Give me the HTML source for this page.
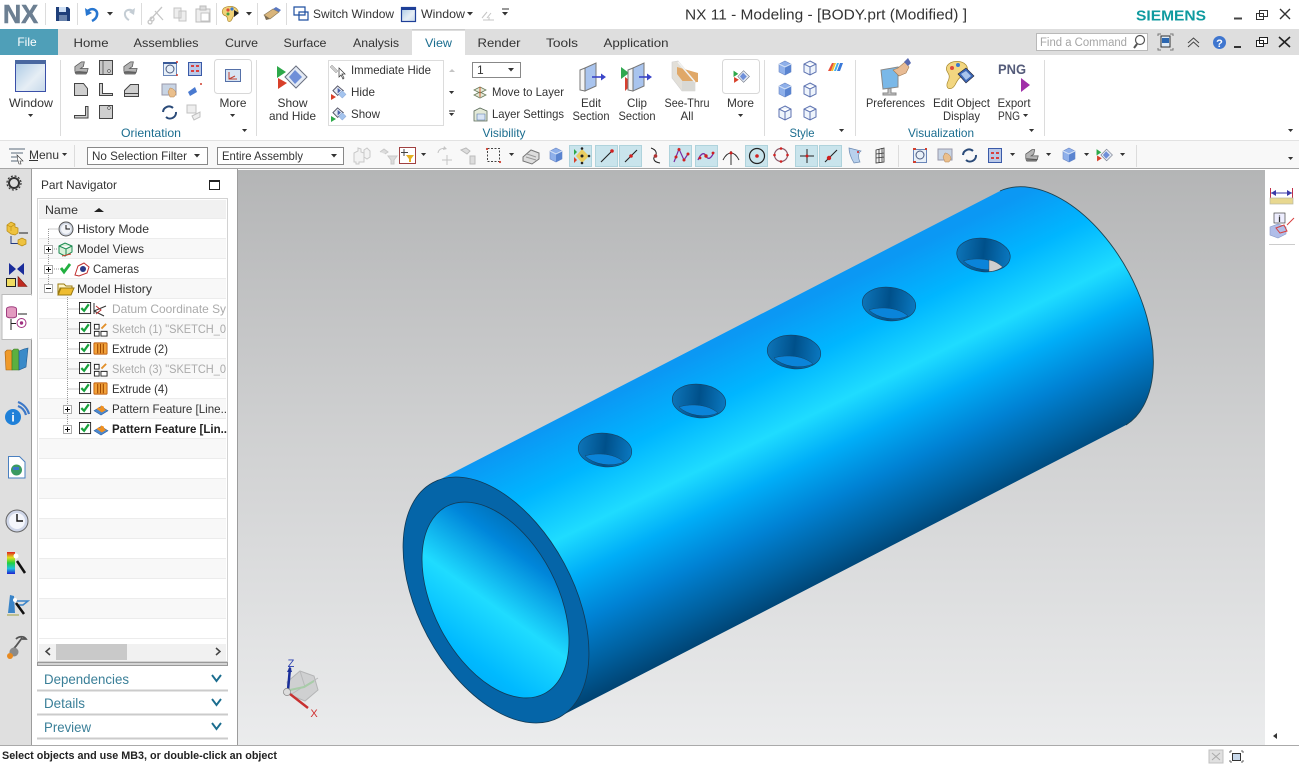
<!DOCTYPE html>
<html><head><meta charset="utf-8"><title>NX 11 - Modeling</title>
<style>
html,body{margin:0;padding:0;width:1299px;height:767px;overflow:hidden;background:#fff}
svg{display:block;position:absolute;left:0;top:0}
text{font-family:"Liberation Sans",sans-serif;font-size:12px;fill:#333}
.m{text-anchor:middle}
.t{fill:#1b6d8f}
.g{fill:#aaa}
.d{fill:#3a7f98;font-size:14px}
.sep{stroke:#dcdcdc;stroke-width:1}
</style></head><body>
<svg width="1299" height="767" viewBox="0 0 1299 767" xmlns="http://www.w3.org/2000/svg">
<defs>
<linearGradient id="bg" x1="0" y1="0" x2="0" y2="1"><stop offset="0" stop-color="#b4b5b6"/><stop offset=".45" stop-color="#cfd0d1"/><stop offset="1" stop-color="#ebeced"/></linearGradient>
<linearGradient id="cyl" gradientUnits="userSpaceOnUse" x1="447" y1="477" x2="563" y2="713">
<stop offset="0" stop-color="#0b98f4"/><stop offset=".2" stop-color="#00b6ff"/><stop offset=".4" stop-color="#1fdcff"/><stop offset=".55" stop-color="#00aef8"/><stop offset=".72" stop-color="#0082d4"/><stop offset=".88" stop-color="#00609f"/><stop offset="1" stop-color="#004474"/></linearGradient>
<linearGradient id="inn" gradientUnits="userSpaceOnUse" x1="450" y1="510" x2="540" y2="690">
<stop offset="0" stop-color="#00609f"/><stop offset=".25" stop-color="#0086da"/><stop offset=".53" stop-color="#1fdcff"/><stop offset=".8" stop-color="#00baff"/><stop offset="1" stop-color="#00a6f4"/></linearGradient>
<linearGradient id="hole" x1="0" y1="0" x2="1" y2="0"><stop offset="0" stop-color="#0d74b8"/><stop offset=".5" stop-color="#00508a"/><stop offset="1" stop-color="#0a78c0"/></linearGradient>
<linearGradient id="win" x1="0" y1="0" x2="1" y2="1"><stop offset="0" stop-color="#a9c8e4"/><stop offset=".6" stop-color="#e6eef5"/><stop offset="1" stop-color="#c5d8ea"/></linearGradient>
<linearGradient id="rb" x1="0" y1="0" x2="0" y2="1"><stop offset="0" stop-color="#e02020"/><stop offset=".25" stop-color="#e0e020"/><stop offset=".5" stop-color="#20d040"/><stop offset=".75" stop-color="#20c0e0"/><stop offset="1" stop-color="#2020d0"/></linearGradient>
<symbol id="dn" viewBox="0 0 7 4" overflow="visible"><path d="M0 0h6l-3 3.500z" fill="#333"/></symbol>
<symbol id="cube" viewBox="0 0 16 16"><path d="M8 1l6 3v8l-6 3-6-3V4z" fill="#8fb0ea" stroke="#6a86c4" stroke-width=".6"/><path d="M8 7v8l6-3V4z" fill="#5a84d0"/><path d="M2 4l6 3 6-3" fill="none" stroke="#d4e2f6"/></symbol>
<symbol id="wire" viewBox="0 0 16 16"><path d="M8 1l6 3v8l-6 3-6-3V4zM2 4l6 3 6-3M8 7v8" fill="#eef4fb" stroke="#5d72b0"/></symbol>
<symbol id="part" viewBox="0 0 18 18"><path d="M2 13V8l7-5h3l-1 5-3 2h8l-1 4z" fill="#b4b4b4" stroke="#555" stroke-width=".8"/><path d="M2 14h13l-1 2H3z" fill="#777" stroke="#444" stroke-width=".5"/></symbol>
<symbol id="check" viewBox="0 0 14 14"><rect x=".5" y=".5" width="12" height="12" fill="#fff" stroke="#222"/><path d="M2.500 6.500l3 3 5-7" fill="none" stroke="#17a23c" stroke-width="2.400"/></symbol>
<symbol id="plus" viewBox="0 0 9 9"><rect x=".5" y=".5" width="8" height="8" fill="#fff" stroke="#aaa"/><path d="M2 4.500h5M4.500 2v5" stroke="#111"/></symbol>
<symbol id="ext" viewBox="0 0 16 16"><rect x="1" y="2" width="14" height="12" rx="1" fill="#f2a23a" stroke="#c06010"/><path d="M5 3v10M8 3v10M11 3v10" stroke="#a34a00" stroke-width="1.200"/></symbol>
<symbol id="skt" viewBox="0 0 16 16"><path d="M1.500 2.500h5v5h-5zM1.500 10h5v5h-5zM8.500 10h6.500v5H8.500z" fill="#fff" stroke="#222"/><path d="M9 7l5-5" stroke="#e2902a" stroke-width="2"/></symbol>
<symbol id="pat" viewBox="0 0 18 16"><path d="M1 10l8-5 8 5-8 5z" fill="#4a88d0" stroke="#2a5a9a" stroke-width=".6"/><path d="M4 8l2-2 2 1 1-3 3 1 1 3 2 1-5 3z" fill="#f09020"/></symbol>
<symbol id="sh" viewBox="0 0 32 24"><path d="M1 1l9 6-9 6z" fill="#2ea84a"/><path d="M2 13l9 5-9 6z" fill="#d8402a"/><path d="M20 1l11 11-11 11L9 12z" fill="#e4eaf4" stroke="#6a7080"/><path d="M19 5l7 7-7 7-6-7z" fill="#6f8fd8"/></symbol>
<symbol id="sh2" viewBox="0 0 16 16"><path d="M6 1l6 5-6 5-5-5z" fill="#e4eaf4" stroke="#556"/><path d="M6 3l3.500 3L6 9z" fill="#4a62a8"/><path d="M11 6l4 4-4 4-4-4z" fill="#a4c4ee" stroke="#7a9ad0" stroke-width=".5"/></symbol>
</defs>

<rect width="1299" height="29" fill="#fff"/>
<rect y="29" width="1299" height="26" fill="#dedede"/>
<rect x="0" y="29" width="58" height="26" fill="#4f9fb8"/>
<rect x="412" y="30" width="53" height="26" fill="#fff"/>
<path d="M412 30h53" stroke="#bbb"/>
<rect y="55" width="1299" height="85" fill="#fff"/>
<rect y="140" width="1299" height="28" fill="#f8f8f8"/>
<path d="M0 140.500h1299" stroke="#e2e2e2"/>
<path d="M0 168.500h1299" stroke="#a5a5a5"/>
<rect y="169" width="31" height="576" fill="#dfdfdf"/>
<rect x="31" y="169" width="207" height="576" fill="#fff"/>
<rect x="238" y="170" width="1027" height="575" fill="url(#bg)"/>
<rect x="1265" y="169" width="34" height="576" fill="#fff"/>
<path d="M31.500 169v576M237.500 169v576" stroke="#9c9c9c"/>
<path d="M1269 244.500h26" stroke="#ccc"/>
<rect y="745" width="1299" height="22" fill="#fff"/>
<path d="M0 745.500h1299" stroke="#aaa"/>

<!-- title row -->
<text x="3" y="23" style="font-size:26px;font-weight:700;fill:#6c7f92;stroke:#6c7f92;stroke-width:.6" textLength="35" lengthAdjust="spacingAndGlyphs">NX</text>
<path class="sep" d="M45.500 3v22M77.500 3v22M141.500 3v22M216.500 3v22M257.500 3v22M286.500 3v22"/>
<path d="M56 7h12l2 2v12H56z" fill="#1f3f7a"/><rect x="59" y="7" width="7" height="5" fill="#cfe0f5"/><rect x="59" y="15" width="8" height="6" fill="#6a84ad"/>
<path d="M87 12c4-5 11-3 10 3-.4 3-3 5-5 6" fill="none" stroke="#2776d0" stroke-width="2.600"/><path d="M85 8l1 8 6-3z" fill="#2776d0"/>
<use href="#dn" x="107" y="12" width="7" height="4"/>
<path d="M134 12c-4-4-10-2-9 3 .3 2 2 4 4 5" fill="none" stroke="#c4cdd4" stroke-width="2"/><path d="M135 8l-1 7-5-3z" fill="#c4cdd4"/>
<path d="M150 20l12-13M163 20l-8-9M150 20a2 2 0 1 0 .1 0M152 17a2 2 0 1 0 .1 0" fill="none" stroke="#c6c6c6" stroke-width="1.300"/>
<path d="M174 8h7v10h-7zM179 11h7v10h-7z" fill="#eee" stroke="#c4c4c4"/>
<path d="M196 9h14v13h-14z" fill="#eee" stroke="#bdbdbd"/><rect x="200" y="6" width="6" height="4" fill="#ddd" stroke="#bbb"/><path d="M201 13h8v8h-8z" fill="#fff" stroke="#c4c4c4"/>
<path d="M224 8c5-3 12-2 14 3 1 4-4 3-5 6-1 2-2 6-5 4-1-2 0-4-2-5-4-1-5-5-2-8z" fill="#f1d277" stroke="#b08a30" stroke-width=".7"/><circle cx="228" cy="10" r="1.600" fill="#e04a3a"/><circle cx="232" cy="9" r="1.600" fill="#3a7ad0"/><path d="M234 10l5 3-5 4z" fill="#222"/><circle cx="228" cy="14" r="1.500" fill="#4aa040"/>
<use href="#dn" x="246" y="12" width="7" height="4"/>
<path d="M264 15l9-6 6 3-9 7z" fill="#d9b57b" stroke="#8a7a5a" stroke-width=".7"/><path d="M273 9l6 3 2-2-5-3z" fill="#5a78c0"/><path d="M264 15l6 4-4 1z" fill="#7a6a50"/>
<path d="M294 7h11v8h-11zM299 12h9v8h-9z" fill="#fff" stroke="#1f4fa0" stroke-width="1.200"/>
<text x="313" y="18" textLength="81" lengthAdjust="spacingAndGlyphs">Switch Window</text>
<rect x="401.500" y="7.500" width="14" height="14" fill="url(#win)" stroke="#1e3f98" stroke-width="1.200"/><rect x="401" y="7" width="15" height="3" fill="#1e3f98"/>
<text x="421" y="18" textLength="44" lengthAdjust="spacingAndGlyphs">Window</text>
<use href="#dn" x="467" y="12" width="7" height="4"/>
<path d="M482 18l5-6M487 18l4-5M483 20h11M489 17v3" stroke="#c4c4c4" fill="none"/>
<path d="M502 9h7" stroke="#333"/><use href="#dn" x="502" y="12" width="7" height="4"/>
<text x="685" y="19.500" style="font-size:15px" textLength="282" lengthAdjust="spacingAndGlyphs">NX 11 - Modeling - [BODY.prt (Modified) ]</text>
<text x="1136" y="20.500" style="font-size:15px;font-weight:700;fill:#0f9a9f" textLength="70" lengthAdjust="spacingAndGlyphs">SIEMENS</text>
<path d="M1234 18.500h8" stroke="#444" stroke-width="2"/>
<path d="M1259.500 10.500h8v6h-8zM1256.500 13.500h7v6h-7z" fill="#fff" stroke="#333"/>
<path d="M1280 9l10 10M1290 9l-10 10" stroke="#333" stroke-width="1.400"/>

<!-- tabs -->
<text x="27" y="46" class="m" style="fill:#fff">File</text>
<text x="91" y="47" class="m" textLength="35" lengthAdjust="spacingAndGlyphs">Home</text>
<text x="166" y="47" class="m" textLength="65" lengthAdjust="spacingAndGlyphs">Assemblies</text>
<text x="241.500" y="47" class="m" textLength="33" lengthAdjust="spacingAndGlyphs">Curve</text>
<text x="305" y="47" class="m" textLength="43" lengthAdjust="spacingAndGlyphs">Surface</text>
<text x="376" y="47" class="m" textLength="46" lengthAdjust="spacingAndGlyphs">Analysis</text>
<text x="438.500" y="47" class="m" style="fill:#1b6d8f" textLength="27" lengthAdjust="spacingAndGlyphs">View</text>
<text x="499" y="47" class="m" textLength="43" lengthAdjust="spacingAndGlyphs">Render</text>
<text x="562" y="47" class="m" textLength="32" lengthAdjust="spacingAndGlyphs">Tools</text>
<text x="636" y="47" class="m" textLength="65" lengthAdjust="spacingAndGlyphs">Application</text>
<rect x="1036.500" y="33.500" width="111" height="17" fill="#fff" stroke="#b9b9b9"/>
<text x="1040" y="46" style="font-size:11.500px;fill:#a5a5a5" textLength="87" lengthAdjust="spacingAndGlyphs">Find a Command</text>
<circle cx="1140" cy="40" r="4.500" fill="none" stroke="#555" stroke-width="1.200"/><path d="M1137 44l-3 4" stroke="#555" stroke-width="2"/>
<path d="M1158 36v-2h3M1170 34h3v2M1173 48v2h-3M1161 50h-3v-2" stroke="#777" fill="none"/><rect x="1161" y="36" width="9" height="11" fill="#ddeaf6" stroke="#333"/><rect x="1162" y="38" width="7" height="5" fill="#2a66b0"/>
<path d="M1188 43l5.500-5 5.500 5M1188 47l5.500-5 5.500 5" fill="none" stroke="#444"/>
<circle cx="1219.500" cy="42.500" r="6.500" fill="#3f76cf"/><text x="1219.500" y="47" class="m" style="font-size:11px;font-weight:700;fill:#fff">?</text>
<path d="M1234 47h7" stroke="#333" stroke-width="2"/>
<path d="M1259.500 37.500h8v6h-8zM1256.500 40.500h7v6h-7z" fill="#fff" stroke="#222"/>
<path d="M1279 37l11 10M1290 37l-11 10" stroke="#222" stroke-width="1.600"/>

<!-- ribbon: window -->
<rect x="15.500" y="60.500" width="30" height="31" fill="url(#win)" stroke="#3a4fa8"/><rect x="15" y="60" width="31" height="4" fill="#4a68a0"/>
<text x="31" y="107" class="m" textLength="44" lengthAdjust="spacingAndGlyphs">Window</text>
<use href="#dn" x="28" y="114" width="6" height="3.500"/>
<path class="sep" d="M60.500 60v76M256.500 60v76M764.500 60v76M855.500 60v76M1044.500 60v76"/>

<!-- orientation views -->
<use href="#part" x="73" y="59" width="17" height="17"/>
<path d="M99.500 60.500h13v14h-13z" fill="#c8c8c8" stroke="#444"/><path d="M103 61v13" stroke="#666"/><circle cx="109" cy="71" r="1.300" fill="#fff" stroke="#333" stroke-width=".6"/>
<use href="#part" x="122" y="59" width="17" height="17"/>
<path d="M74.500 83.500h9l4 5v7h-13z" fill="#cfcfcf" stroke="#444"/>
<path d="M99.500 83.500h3v10h10v2h-13z" fill="#cfcfcf" stroke="#444"/>
<path d="M124.500 96.500v-6l6-6h8v12z" fill="#cfcfcf" stroke="#444"/><path d="M124 93.500h14" stroke="#444"/>
<path d="M85.500 106.500h2.500v11.500H74.500v-2.500h11z" fill="#cfcfcf" stroke="#444"/>
<path d="M99.500 105.500h13v13h-13z" fill="#cfcfcf" stroke="#444"/><circle cx="109" cy="108" r="1.300" fill="#fff" stroke="#333" stroke-width=".6"/>
<rect x="163.500" y="62.500" width="13" height="13" fill="#e8f0f8" stroke="#6a86b8"/><path d="M163 62h14v2h-14z" fill="#3a5a98"/><circle cx="170" cy="69" r="4" fill="none" stroke="#4a5a80"/><circle cx="177" cy="62" r="1" fill="#d04030"/><circle cx="177" cy="75" r="1" fill="#d04030"/>
<rect x="188.500" y="62.500" width="13" height="13" fill="#b9c8e8" stroke="#3a5aa8"/><path d="M191 65h3v2h-3zM196 65h3v2h-3zM191 70h3v2h-3zM196 70h3v2h-3z" fill="#d84040"/>
<rect x="162" y="84" width="14" height="11" fill="#c8d4e4" stroke="#99a"/><path d="M170 88c2 0 6 2 6 6l-2 3h-4l-2-5z" fill="#eabf8c" stroke="#b08050" stroke-width=".5"/>
<path d="M188 92l7-5 2 5-7 4z" fill="#4a7ad0"/><circle cx="201" cy="84" r="1" fill="#d04030"/>
<path d="M163 112a6 6 0 0 1 10-4M176 112a6 6 0 0 1-10 5" fill="none" stroke="#2a4a78" stroke-width="2"/>
<path d="M187 105h9v8h-9zM192 116l8-4v5l-6 3z" fill="#eee" stroke="#c0c0c0"/>
<rect x="214.500" y="59.500" width="37" height="34" rx="3" fill="#fff" stroke="#d8d8d8"/>
<rect x="225.500" y="69.500" width="15" height="12" fill="#d7e4f3" stroke="#5570a8"/><path d="M229 72v7h8M229 79l6-3" stroke="#c04030" fill="none"/>
<text x="233" y="107" class="m" textLength="27" lengthAdjust="spacingAndGlyphs">More</text>
<use href="#dn" x="230" y="114" width="6" height="3.500"/>
<text x="151" y="137" class="m t" textLength="60" lengthAdjust="spacingAndGlyphs">Orientation</text>
<use href="#dn" x="242" y="129" width="6" height="3.500"/>

<!-- show hide -->
<use href="#sh" x="276" y="65" width="32" height="24"/>
<text x="292.500" y="107" class="m" textLength="30" lengthAdjust="spacingAndGlyphs">Show</text>
<text x="292.500" y="120" class="m" textLength="47" lengthAdjust="spacingAndGlyphs">and Hide</text>
<rect x="328.500" y="60.500" width="115" height="65" fill="#fff" stroke="#dcdcdc"/>
<path d="M332 65l6 6-2 2-6-6z" fill="#ccc" stroke="#999" stroke-width=".5"/><path d="M339 68v9l2-2 2 4 1-1-2-4h3z" fill="#fff" stroke="#333" stroke-width=".7"/>
<text x="351" y="74" textLength="80" lengthAdjust="spacingAndGlyphs">Immediate Hide</text>
<use href="#sh2" x="332" y="85" width="15" height="15"/><path d="M331 94l5 3-5 3z" fill="#d8402a"/>
<text x="351" y="96" textLength="24" lengthAdjust="spacingAndGlyphs">Hide</text>
<use href="#sh2" x="332" y="107" width="15" height="15"/><path d="M331 116l5 3-5 3z" fill="#2ea84a"/>
<text x="351" y="118" textLength="29" lengthAdjust="spacingAndGlyphs">Show</text>
<path d="M449 72l3-3 3 3z" fill="#c4c4c4"/><use href="#dn" x="449" y="91" width="6" height="3.500"/><path d="M449 111h6" stroke="#333"/><use href="#dn" x="449" y="113" width="6" height="3.500"/>
<rect x="472.500" y="62.500" width="48" height="15" fill="#fff" stroke="#888"/><text x="477" y="74">1</text><use href="#dn" x="508" y="68" width="7" height="4"/>
<path d="M474 90l6-3 6 3-6 3zM474 95l6-3 6 3-6 3z" fill="#e4ead8" stroke="#6a7a5a" stroke-width=".8"/><path d="M480 87v10" stroke="#d06030"/>
<text x="492" y="96" textLength="72" lengthAdjust="spacingAndGlyphs">Move to Layer</text>
<path d="M474 111l6-3 7 3v10h-13z" fill="#e4ead8" stroke="#5a6a5a" stroke-width=".8"/><path d="M477 114h8v6h-8z" fill="#d8e4f4" stroke="#5577aa" stroke-width=".6"/>
<text x="492" y="118" textLength="72" lengthAdjust="spacingAndGlyphs">Layer Settings</text>
<text x="504" y="137" class="m t" textLength="43" lengthAdjust="spacingAndGlyphs">Visibility</text>

<!-- sections -->
<path d="M580 70l5-2v23l-5-1z" fill="#f4f4f4" stroke="#777"/><path d="M585 68l11-5v23l-11 5z" fill="#a9c4ee" stroke="#777"/><path d="M592 77h10" stroke="#3a45c8" stroke-width="1.600"/><path d="M601 73.500l5 3.500-5 3.500z" fill="#3a45c8"/>
<text x="591" y="107" class="m" textLength="20" lengthAdjust="spacingAndGlyphs">Edit</text>
<text x="591" y="120" class="m" textLength="37" lengthAdjust="spacingAndGlyphs">Section</text>
<path d="M621 67l8 6-8 6z" fill="#30a850"/><path d="M625 77l8 6-8 8z" fill="#d84030"/><path d="M628 70l5-2v23l-5-1z" fill="#f4f4f4" stroke="#777"/><path d="M633 68l11-5v23l-11 5z" fill="#a9c4ee" stroke="#777"/><path d="M639 77h9" stroke="#3a45c8" stroke-width="1.600"/><path d="M647 73.500l5 3.500-5 3.500z" fill="#3a45c8"/>
<path d="M672 62l6-1 17 20v10h-13l-10-13z" fill="#e2dfd8" stroke="#d0d0d0" stroke-width=".6"/><path d="M677 67l21 6v9l-14 1-7-9z" fill="#e0a868"/><path d="M682 81h13v10h-13z" fill="#d8d8d4"/><path d="M678 62l17 20" stroke="#f2f2f0" stroke-width="1.500"/>
<text x="637" y="107" class="m" textLength="20" lengthAdjust="spacingAndGlyphs">Clip</text>
<text x="637" y="120" class="m" textLength="37" lengthAdjust="spacingAndGlyphs">Section</text>
<text x="687" y="107" class="m" textLength="45" lengthAdjust="spacingAndGlyphs">See-Thru</text>
<text x="687" y="120" class="m" textLength="13" lengthAdjust="spacingAndGlyphs">All</text>
<rect x="722.500" y="59.500" width="37" height="34" rx="3" fill="#fff" stroke="#d8d8d8"/>
<use href="#sh" x="733" y="70" width="17" height="13"/>
<text x="740.500" y="107" class="m" textLength="27" lengthAdjust="spacingAndGlyphs">More</text>
<use href="#dn" x="738" y="114" width="6" height="3.500"/>

<!-- style -->
<use href="#cube" x="777" y="60" width="16" height="16"/><use href="#wire" x="802" y="60" width="16" height="16"/>
<path d="M828 71l4-8h2l-3 8z" fill="#e8503a"/><path d="M831 71l3-8h2l-3 8z" fill="#f0c030"/><path d="M834 71l3-8h2l-3 8z" fill="#40b0e8"/><path d="M837 71l3-8h3l-3 8z" fill="#3a78d8"/>
<use href="#cube" x="777" y="82" width="16" height="16"/><use href="#wire" x="802" y="82" width="16" height="16"/>
<use href="#wire" x="777" y="105" width="16" height="16"/><use href="#wire" x="802" y="105" width="16" height="16"/>
<text x="802" y="137" class="m t" textLength="25" lengthAdjust="spacingAndGlyphs">Style</text>
<use href="#dn" x="839" y="129" width="6" height="3.500"/>

<!-- visualization -->
<path d="M881 70l17-3v20l-15 2z" fill="#7ab8e8" stroke="#8a8a8a"/><path d="M888 89v4h-5v2h13v-2h-5v-5z" fill="#c4c4c4" stroke="#888"/><path d="M893 70l5-2 7-6 4 5-3 6-7 3z" fill="#e8bb94" stroke="#a07a50" stroke-width=".6"/><path d="M904 62l4-4 3 5-3 3z" fill="#5a6ab0"/>
<text x="895.500" y="107" class="m" textLength="59" lengthAdjust="spacingAndGlyphs">Preferences</text>
<path d="M947 66c4-6 15-6 19-1 3 4 1 10-3 11-4 1-6 5-8 9-3 5-9 5-8-1 1-4 3-5 2-9-1-3-4-5-2-9z" fill="#f2d680" stroke="#a88a30" stroke-width=".7"/><circle cx="952" cy="68" r="2" fill="#e04a3a"/><circle cx="958" cy="65" r="2" fill="#3a7ad0"/><path d="M958 74l8-6 8 8-8 7z" fill="#3c68b8" stroke="#223" stroke-width=".6"/><path d="M961 74l5-3 5 5-5 4z" fill="#a9c4ec"/>
<text x="961.500" y="107" class="m" textLength="57" lengthAdjust="spacingAndGlyphs">Edit Object</text>
<text x="961.500" y="120" class="m" textLength="37" lengthAdjust="spacingAndGlyphs">Display</text>
<text x="998" y="74" style="font-size:14px;font-weight:700;fill:#555c7a" textLength="28" lengthAdjust="spacingAndGlyphs">PNG</text>
<path d="M1021 78l9 7-9 7z" fill="#a02fa8"/>
<text x="1014" y="107" class="m" textLength="33" lengthAdjust="spacingAndGlyphs">Export</text>
<text x="1009" y="120" class="m" textLength="22" lengthAdjust="spacingAndGlyphs">PNG</text>
<use href="#dn" x="1023" y="114" width="6" height="3.500"/>
<text x="941" y="137" class="m t" textLength="66" lengthAdjust="spacingAndGlyphs">Visualization</text>
<use href="#dn" x="1029" y="129" width="6" height="3.500"/>
<use href="#dn" x="1288" y="129" width="6" height="3.500"/>

<!-- toolbar -->
<path d="M9 149h16M11 153h12M11 157h8M11 161h8" stroke="#5a6a7a"/><path d="M17 155l6 6-3 0 1 3-2 0-1-3z" fill="#fff" stroke="#333" stroke-width=".6"/>
<text x="29" y="159" textLength="30" lengthAdjust="spacingAndGlyphs">Menu</text><path d="M29 160.500h9" stroke="#333"/>
<use href="#dn" x="62" y="153" width="6" height="3.500"/>
<path class="sep" d="M74.500 145v22M898.500 145v22M1136.500 145v22"/>
<rect x="87.500" y="147.500" width="120" height="17" fill="#fff" stroke="#888"/><text x="92" y="160" textLength="95" lengthAdjust="spacingAndGlyphs">No Selection Filter</text><use href="#dn" x="194" y="154" width="7" height="4"/>
<rect x="217.500" y="147.500" width="126" height="17" fill="#fff" stroke="#888"/><text x="222" y="160" textLength="81" lengthAdjust="spacingAndGlyphs">Entire Assembly</text><use href="#dn" x="331" y="154" width="7" height="4"/>
<path d="M354 153l4-2v-3l3 1v3l3 1v9h-5v2h-3v-2h-2zM364 150l3-2 3 3v6l-3 2-3-2z" fill="#f2f2f2" stroke="#c8c8c8"/>
<path d="M380 152l4-3 4 3-3 2M388 156h9l-3 4v4h-3v-4z" fill="#dcdcdc" stroke="#c8c8c8"/>
<rect x="399.500" y="147.500" width="16" height="16" fill="#fff" stroke="#a04040"/><path d="M404 149v7M401 152.500h7" stroke="#444"/><path d="M406 155h8l-3 4v3h-2v-3z" fill="#e6b020"/>
<use href="#dn" x="421" y="153" width="6" height="3.500"/>
<path d="M438 153a5 5 0 0 1 7-4M447 155v10M442 160h10" fill="none" stroke="#c4c4c4"/><path d="M444 146l3 3-4 1z" fill="#c4c4c4"/>
<path d="M461 150l5-2 4 3-3 3zM470 156h5v8h-5z" fill="#ddd" stroke="#bbb"/>
<rect x="487.500" y="148.500" width="12" height="13" fill="none" stroke="#444" stroke-dasharray="2 1.500"/><circle cx="487" cy="149" r="1.100" fill="#d04030"/><circle cx="500" cy="162" r="1.100" fill="#d04030"/>
<use href="#dn" x="509" y="153" width="6" height="3.500"/>
<path d="M523 157l8-7 8 3 0 6-7 5-9-3z" fill="#ddd" stroke="#777"/><path d="M527 154l9 3M526 157l10 3" stroke="#999"/>
<use href="#cube" x="548" y="146" width="16" height="18"/>
<g fill="#c9e4ec" stroke="#afd3dc"><rect x="569.500" y="145.500" width="22" height="21"/><rect x="595.500" y="145.500" width="22" height="21"/><rect x="619.500" y="145.500" width="22" height="21"/><rect x="669.500" y="145.500" width="22" height="21"/><rect x="695.500" y="145.500" width="22" height="21"/><rect x="745.500" y="145.500" width="22" height="21"/><rect x="795.500" y="145.500" width="22" height="21"/><rect x="819.500" y="145.500" width="22" height="21"/></g>
<path d="M582 149l7 7-7 7-6-7z" fill="#ebcd60"/><circle cx="582" cy="148.500" r="1.300" fill="#222"/><circle cx="582" cy="163" r="1.300" fill="#222"/><circle cx="589" cy="156" r="1.300" fill="#222"/><circle cx="582" cy="156" r="1.500" fill="#222"/><path d="M574 149l3 3-3 3z" fill="#2ea84a"/><path d="M574 157l3 3-3 3z" fill="#d8402a"/>
<path d="M601 162l12-12M625 162l12-12" stroke="#222" stroke-width="1.100"/><circle cx="612" cy="151" r="1.800" fill="#d02020"/><circle cx="631" cy="156" r="1.800" fill="#d02020"/>
<path d="M651 148c6 2 6 6 4 8s-2 6 5 7" fill="none" stroke="#222"/><circle cx="655.500" cy="156" r="1.800" fill="#b03030"/>
<path d="M674 162l5-13 5 11 4-6" fill="none" stroke="#7a2aa0" stroke-width="1.200"/><circle cx="679" cy="149.500" r="1.500" fill="#d02020"/><circle cx="684" cy="160" r="1.500" fill="#d02020"/><circle cx="676" cy="157" r="1.500" fill="#d02020"/><circle cx="688" cy="154" r="1.500" fill="#d02020"/>
<path d="M698 160c3-7 6-8 8-4s5 3 8-4" fill="none" stroke="#7a2aa0" stroke-width="1.300"/><circle cx="706" cy="156" r="1.700" fill="#d02020"/><circle cx="700" cy="158" r="1.400" fill="#d02020"/><circle cx="713" cy="153" r="1.400" fill="#d02020"/>
<path d="M731 151v14M723 160c2-4 5-7 8-7s6 3 8 7" fill="none" stroke="#333"/><circle cx="731" cy="153" r="1.500" fill="#d02020"/>
<circle cx="757" cy="156" r="7.500" fill="none" stroke="#222" stroke-width="1.200"/><circle cx="757" cy="156" r="1.800" fill="#d02020"/>
<circle cx="781" cy="155" r="6.500" fill="none" stroke="#8a5a6a" stroke-width="1.200"/><g fill="#d02020"><circle cx="781" cy="148.500" r="1.300"/><circle cx="781" cy="161.500" r="1.300"/><circle cx="774.500" cy="155" r="1.300"/><circle cx="787.500" cy="155" r="1.300"/></g>
<path d="M807 149v14M800 156h14" stroke="#222"/><circle cx="807" cy="156" r="1.500" fill="#d02020"/>
<path d="M825 162l12-12" stroke="#222" stroke-width="1.100"/><circle cx="829" cy="158" r="2.200" fill="#d02020"/>
<path d="M849 148l12 3c-3 2-3 7-1 11l-6 1c-3-5-5-10-5-15z" fill="#b8d0ec" stroke="#6a88b0" stroke-width=".7"/><circle cx="858" cy="152" r="1" fill="#d02020"/>
<path d="M876 150l8-2v14l-8 1zM876 154l8-1M876 158l8-1M879 149v14M882 148v14" fill="#f4f4f4" stroke="#333" stroke-width=".8"/>
<rect x="913.500" y="149.500" width="13" height="13" fill="#e8f0f8" stroke="#6a86b8"/><circle cx="920" cy="155" r="4" fill="none" stroke="#4a5a80"/><path d="M913 149h3M927 149h-2M913 162h3" stroke="#d04030" stroke-width="2"/>
<rect x="938" y="149" width="14" height="11" fill="#c8d4e4" stroke="#99a"/><path d="M945 153c2 0 6 2 6 6l-2 3h-4l-2-5z" fill="#eabf8c" stroke="#b08050" stroke-width=".5"/>
<path d="M963 155a6 6 0 0 1 10-4M976 155a6 6 0 0 1-10 5" fill="none" stroke="#2a4a78" stroke-width="2"/>
<rect x="988.500" y="148.500" width="13" height="14" fill="#b9c8e8" stroke="#3a5aa8"/><path d="M991 152h3v2h-3zM996 152h3v2h-3zM991 157h3v2h-3zM996 157h3v2h-3z" fill="#d84040"/>
<use href="#dn" x="1010" y="153" width="6" height="3.500"/>
<use href="#part" x="1024" y="147" width="16" height="16"/>
<use href="#dn" x="1046" y="153" width="6" height="3.500"/>
<use href="#cube" x="1061" y="147" width="16" height="16"/>
<use href="#dn" x="1084" y="153" width="6" height="3.500"/>
<use href="#sh" x="1096" y="148" width="17" height="14"/>
<use href="#dn" x="1120" y="153" width="6" height="3.500"/>
<use href="#dn" x="1288" y="157" width="6" height="3.500"/>

<!-- left bar -->
<path d="M2 294.500h29.500v45H2z" fill="#fff" stroke="#bbb"/><path d="M31.500 295.500v43" stroke="#fff" stroke-width="2"/>
<circle cx="14" cy="183" r="5" fill="none" stroke="#333" stroke-width="2"/><circle cx="14" cy="183" r="7" fill="none" stroke="#333" stroke-width="1.200" stroke-dasharray="2 1.700"/>
<path d="M7 225l4-3 4 2v3l3 1v5l-3 2-4-1-4-3z" fill="#eec240" stroke="#b88a10" stroke-width=".7"/><path d="M7 225l4 2 4-3M11 227v4" stroke="#b88a10" stroke-width=".6" fill="none"/>
<path d="M19 233h9" stroke="#222"/><path d="M11 236v8M11 243.500h7" stroke="#223a80" fill="none"/>
<path d="M18 240l4-2 4 2v4l-4 2-4-2z" fill="#eec240" stroke="#b88a10" stroke-width=".7"/>
<path d="M9 263l7 6-7 6zM24 263l-7 6 7 6z" fill="#1a2c9a"/><rect x="6.500" y="278.500" width="9" height="8" fill="#f0dc60" stroke="#222"/><path d="M18 286.500v-10l9 10z" fill="#c02a20" stroke="#7a1a10" stroke-width=".6"/>
<path d="M6.500 309c0-3 10-3 10 0v7c0 2.500-10 2.500-10 0z" fill="#e39ac0" stroke="#a04080"/><path d="M11 319v11M11 323.500h5M18 314h9" stroke="#222" fill="none"/><circle cx="21.500" cy="323" r="4.500" fill="none" stroke="#a03080"/><circle cx="21.500" cy="323" r="1.700" fill="#a03080"/>
<path d="M5 352l2-2h4l1 2v18H6z" fill="#ef9a2a" stroke="#a66010" stroke-width=".6"/><path d="M12 351l2-2h4l1 2v19h-7z" fill="#5cb040" stroke="#3a7a20" stroke-width=".6"/><path d="M19 351l5-2 4-1-2 19-7 3z" fill="#3a8ac8" stroke="#205a90" stroke-width=".6"/>
<path d="M18 406a13 13 0 0 1 8 9M18 402a18 18 0 0 1 11 12" fill="none" stroke="#3c78c8" stroke-width="2.200"/><circle cx="13" cy="417" r="8" fill="#1f80d8"/><text x="13" y="421.500" class="m" style="font-size:12px;font-weight:700;fill:#fff">i</text>
<path d="M8.500 456.500h11l5.500 5.500v16H8.500z" fill="#fff" stroke="#4a80c0"/><circle cx="16.500" cy="470" r="5.500" fill="#3a9a60"/><path d="M13 467h6v3h-6z" fill="#3a78c8"/>
<circle cx="17" cy="521" r="11" fill="#cfd6e8" stroke="#666"/><circle cx="17" cy="521" r="8" fill="#f4f6fb"/><path d="M17 514v7h6" fill="none" stroke="#111" stroke-width="1.400"/>
<rect x="7" y="552" width="8" height="22" fill="url(#rb)"/><path d="M17 561l8 12" stroke="#111" stroke-width="2.500"/><circle cx="16" cy="556" r="2.500" fill="#fff"/>
<path d="M8 613l2-18 4 1 1 17z" fill="#3a84c8"/><path d="M16 601h12l-5 4h-6" fill="none" stroke="#3a84c8" stroke-width="1.500"/><path d="M16 603l8 11" stroke="#111" stroke-width="2.500"/><path d="M7 615h12" stroke="#a0a040"/><circle cx="15" cy="600" r="2" fill="#fff"/>
<path d="M10 653l6-7 6-8M16 639c3-3 8-3 10 0l-4 0" fill="none" stroke="#555" stroke-width="1.800"/><circle cx="14" cy="652" r="4.500" fill="#8a8a8a"/><circle cx="10" cy="656" r="3" fill="#e88a20"/>

<!-- navigator -->
<text x="41" y="189" textLength="76" lengthAdjust="spacingAndGlyphs">Part Navigator</text>
<rect x="209.500" y="180.500" width="10" height="9" fill="none" stroke="#222"/><path d="M209 181h11" stroke="#222" stroke-width="2"/>
<rect x="37.500" y="198.500" width="190" height="463" fill="#fff" stroke="#d2d2d2"/>
<rect x="39" y="200" width="187" height="18" fill="#f1f1f1"/>
<text x="45" y="214" textLength="33" lengthAdjust="spacingAndGlyphs">Name</text>
<path d="M94 212l5-4 5 4z" fill="#222"/>
<g fill="#f8f8f8"><rect x="39" y="239" width="187" height="20"/><rect x="39" y="279" width="187" height="20"/><rect x="39" y="319" width="187" height="20"/><rect x="39" y="359" width="187" height="20"/><rect x="39" y="399" width="187" height="20"/><rect x="39" y="439" width="187" height="20"/><rect x="39" y="479" width="187" height="20"/><rect x="39" y="519" width="187" height="20"/><rect x="39" y="559" width="187" height="20"/><rect x="39" y="599" width="187" height="20"/></g>
<path stroke="#ececec" d="M39 218.500h187M39 238.500h187M39 258.500h187M39 278.500h187M39 298.500h187M39 318.500h187M39 338.500h187M39 358.500h187M39 378.500h187M39 398.500h187M39 418.500h187M39 438.500h187M39 458.500h187M39 478.500h187M39 498.500h187M39 518.500h187M39 538.500h187M39 558.500h187M39 578.500h187M39 598.500h187M39 618.500h187M39 638.500h187"/>
<path d="M48.500 229v55M48.500 229h9M52 249h5M52 269h8M67.500 297v130M67.500 309h11M67.500 329h11M67.500 349h11M67.500 369h11M67.500 389h11" stroke="#999" stroke-dasharray="1 1" fill="none"/>
<circle cx="66" cy="229" r="7" fill="#d0d6e2" stroke="#555"/><circle cx="66" cy="229" r="5" fill="#f2f4f8"/><path d="M66 225v4h4" stroke="#111" fill="none"/>
<text x="77" y="233" textLength="72" lengthAdjust="spacingAndGlyphs">History Mode</text>
<use href="#plus" x="44" y="245" width="9" height="9"/>
<path d="M59 246l6-3 7 3v6l-7 4-6-3z M59 246l7 3 6-3M66 249v7" fill="#d8f0d8" stroke="#1a8a50"/><path d="M62 256l9-2" stroke="#d04030"/>
<text x="77" y="253" textLength="67" lengthAdjust="spacingAndGlyphs">Model Views</text>
<use href="#plus" x="44" y="265" width="9" height="9"/>
<path d="M61 268l3 4 6-8" fill="none" stroke="#22b040" stroke-width="2.800"/>
<path d="M75 275l3-9 6-3 5 4-2 6-8 3z" fill="#fff" stroke="#c03030"/><circle cx="83" cy="269" r="3" fill="#2a3a8a"/>
<text x="93" y="273" textLength="46" lengthAdjust="spacingAndGlyphs">Cameras</text>
<rect x="44.500" y="284.500" width="8" height="8" fill="#fff" stroke="#aaa"/><path d="M46 288.500h5" stroke="#111"/>
<path d="M58 284h6l2 2h6v2h-12l-2 7z" fill="#fff6c8" stroke="#9a7a10"/><path d="M58 295l3-7h13l-3 7z" fill="#eebc30" stroke="#9a7a10"/>
<text x="77" y="293" textLength="75" lengthAdjust="spacingAndGlyphs">Model History</text>
<use href="#check" x="79" y="302" width="13" height="13"/><path d="M94 303v11M94 311l12-5M94 311l10 5" stroke="#333" fill="none"/><path d="M96 306l5 4-5 4" fill="none" stroke="#c03030"/>
<text x="112" y="313" class="g" textLength="114" lengthAdjust="spacingAndGlyphs">Datum Coordinate Sy</text>
<use href="#check" x="79" y="322" width="13" height="13"/><use href="#skt" x="93" y="322" width="15" height="15"/>
<text x="112" y="333" class="g" textLength="114" lengthAdjust="spacingAndGlyphs">Sketch (1) "SKETCH_0</text>
<use href="#check" x="79" y="342" width="13" height="13"/><use href="#ext" x="93" y="341" width="15" height="15"/>
<text x="112" y="353" textLength="56" lengthAdjust="spacingAndGlyphs">Extrude (2)</text>
<use href="#check" x="79" y="362" width="13" height="13"/><use href="#skt" x="93" y="362" width="15" height="15"/>
<text x="112" y="373" class="g" textLength="114" lengthAdjust="spacingAndGlyphs">Sketch (3) "SKETCH_0</text>
<use href="#check" x="79" y="382" width="13" height="13"/><use href="#ext" x="93" y="381" width="15" height="15"/>
<text x="112" y="393" textLength="56" lengthAdjust="spacingAndGlyphs">Extrude (4)</text>
<use href="#plus" x="63" y="405" width="9" height="9"/><use href="#check" x="79" y="402" width="13" height="13"/><use href="#pat" x="93" y="402" width="16" height="14"/>
<text x="112" y="413" textLength="115" lengthAdjust="spacingAndGlyphs">Pattern Feature [Line..</text>
<use href="#plus" x="63" y="425" width="9" height="9"/><use href="#check" x="79" y="422" width="13" height="13"/><use href="#pat" x="93" y="422" width="16" height="14"/>
<text x="112" y="433" style="font-weight:700;fill:#222" textLength="115" lengthAdjust="spacingAndGlyphs">Pattern Feature [Lin..</text>

<rect x="39" y="644" width="187" height="17" fill="#f1f1f1"/>
<rect x="56" y="644" width="71" height="16" fill="#c9c9c9"/>
<path d="M50 648l-4 3.500 4 3.500M216 648l4 3.500-4 3.500" fill="none" stroke="#444" stroke-width="1.500"/>
<rect x="37.500" y="662.500" width="190" height="3" fill="#d4d4d4" stroke="#999"/>
<text x="44" y="684" class="d" textLength="85" lengthAdjust="spacingAndGlyphs">Dependencies</text>
<text x="44" y="708" class="d" textLength="41" lengthAdjust="spacingAndGlyphs">Details</text>
<text x="44" y="732" class="d" textLength="47" lengthAdjust="spacingAndGlyphs">Preview</text>
<path d="M212 675l4.500 6 4.500-6M212 699l4.500 6 4.500-6M212 723l4.500 6 4.500-6" fill="none" stroke="#1b6d8f" stroke-width="1.900"/>
<path d="M37 690.500h191M37 714.500h191M37 738.500h191" stroke="#cbcbcb" stroke-width="2"/>

<!-- model -->
<path d="M433 483L1000 191A133 78 61.700 0 1 1126 425L559 717Z" fill="url(#cyl)"/>
<path d="M1000 191A133 78 61.700 0 1 1126 425" fill="none" stroke="#1d4250" stroke-width=".9"/>
<ellipse cx="496" cy="600" rx="133.300" ry="77.400" transform="rotate(61.700 496 600)" fill="#0565a8" stroke="#123a55" stroke-width=".8"/>
<ellipse cx="495.500" cy="600" rx="105.600" ry="62" transform="rotate(62.500 495.500 600)" fill="url(#inn)" stroke="#123a55" stroke-width=".8"/>
<defs>
<g id="hl"><ellipse cx="0" cy="0" rx="26.800" ry="16.700" transform="rotate(6)" fill="url(#hole)" stroke="#15466a" stroke-width=".7"/><path d="M-20 6C-12 3 8 2 19 12A26.800 16.700 6 0 1-20 6z" fill="#0a84da" stroke="#15466a" stroke-width=".5"/></g>
</defs>
<use href="#hl" x="605" y="450"/><use href="#hl" x="699" y="401"/><use href="#hl" x="794" y="352"/><use href="#hl" x="889" y="304"/><use href="#hl" x="983.500" y="255"/>
<path d="M989 260C995 261 999 264 1002.500 267 998 270 993 271.500 989 271.500z" fill="#cfcfcf" stroke="#444" stroke-width=".4"/>

<!-- triad -->
<path d="M300 671l14 5 4 14-13 11-15-6-3-13z" fill="#cfd0d1" stroke="#b4b5b6"/><path d="M303 687l15-9M300 671l5 16M290 695l13-8" stroke="#b8b9ba" fill="none"/><path d="M290 690l14-3 10-6" stroke="#a8cca8" stroke-width="2" fill="none"/>
<path d="M288 690l2-22" stroke="#1a2f9a" stroke-width="2.500"/><path d="M287 672l3-6 2 6z" fill="#1a2f9a"/>
<path d="M290 694l18 14" stroke="#c83030" stroke-width="2.400"/>
<circle cx="287" cy="692" r="3.600" fill="#dcdcdc" stroke="#888" stroke-width=".7"/>
<text x="291" y="667" class="m" style="font-size:11px;fill:#2a3fb0">Z</text>
<text x="314" y="717" class="m" style="font-size:11px;fill:#d03030">X</text>

<!-- right bar -->
<path d="M1270.500 188v11M1292.500 188v11" stroke="#c0304a"/><path d="M1271 193h21" stroke="#3a3aa8"/><path d="M1271 193l5-3v6zM1292 193l-5-3v6z" fill="#3a3aa8"/>
<rect x="1270" y="198" width="23" height="6" fill="#e8d890" stroke="#b8b8a0" stroke-width=".7"/>
<path d="M1270 227l8-3 8 3v7l-8 4-8-3z" fill="#b0bde8" stroke="#8a9ac8" stroke-width=".6"/><rect x="1274" y="213" width="11" height="10" fill="#eef" stroke="#444" stroke-width=".7"/><text x="1279.500" y="222" class="m" style="font-size:9px;font-weight:700">i</text><path d="M1276 228l8-3 3 6-7 2zM1287 225l7-7" fill="none" stroke="#d84040"/>
<path d="M1277 733v6l-4-3z" fill="#333"/>

<!-- status -->
<text x="2" y="759" style="font-size:11px;font-weight:700;fill:#222" textLength="275" lengthAdjust="spacingAndGlyphs">Select objects and use MB3, or double-click an object</text>
<path d="M1209 750h14v13h-14z" fill="#e0e0e0" stroke="#c0c0c0"/><path d="M1212 760l8-7M1212 753l8 7" stroke="#aaa"/>
<path d="M1230 751h2M1241 751h2M1230 762h2M1241 762h2M1230 751v2M1243 751v2M1230 762v-2M1243 762v-2" stroke="#666"/><rect x="1232.500" y="753.500" width="8" height="7" fill="#c8d8ea" stroke="#333"/>
</svg>
</body></html>
